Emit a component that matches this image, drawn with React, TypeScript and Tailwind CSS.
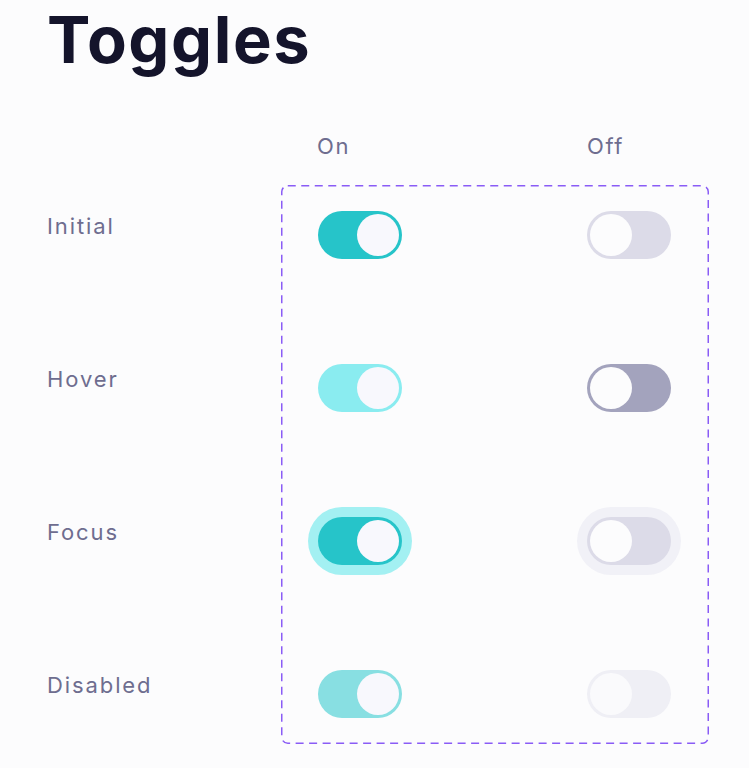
import React from 'react'

type Variant = {
  track: string
  thumb: string
  ring?: string
}

const rows: { label: string; on: Variant; off: Variant }[] = [
  {
    label: 'Initial',
    on: { track: 'bg-[#26c4c9]', thumb: 'bg-[#f8f8fd]' },
    off: { track: 'bg-[#dcdbe8]', thumb: 'bg-[#fcfcfd]' },
  },
  {
    label: 'Hover',
    on: { track: 'bg-[#8aecf0]', thumb: 'bg-[#f8f8fd]' },
    off: { track: 'bg-[#a3a3bd]', thumb: 'bg-[#fcfcfd]' },
  },
  {
    label: 'Focus',
    on: { track: 'bg-[#26c4c9]', thumb: 'bg-[#f8f8fd]', ring: 'shadow-[0_0_0_10px_#a3f0f2]' },
    off: { track: 'bg-[#dcdbe8]', thumb: 'bg-[#fcfcfd]', ring: 'shadow-[0_0_0_10px_#f1f1f7]' },
  },
  {
    label: 'Disabled',
    on: { track: 'bg-[#88dfe2]', thumb: 'bg-[#f8f8fd]' },
    off: { track: 'bg-[#efeff5]', thumb: 'bg-[#fafafc]' },
  },
]

function Toggle({ checked, v }: { checked: boolean; v: Variant }) {
  return (
    <div
      className={`flex h-[48px] w-[84px] rounded-full p-[3px] ${checked ? 'justify-end' : 'justify-start'} ${v.track} ${v.ring ?? ''}`}
    >
      <div className={`h-[42px] w-[42px] rounded-full ${v.thumb}`} />
    </div>
  )
}

export default function App() {
  return (
    <div
      className="min-h-[768px] w-full bg-[#fcfcfd] pl-[47px]"
      style={{ fontFamily: 'Inter, "Noto Sans", sans-serif' }}
    >
      <h1 className="pt-[2px] text-[65px] leading-[76px] font-bold tracking-[1.6px] text-[#14142b]">Toggles</h1>

      {/* column headers */}
      <div className="mt-[53px] flex text-[22px] leading-[30px] tracking-[1.6px] text-[#6e6d8f]">
        <div className="w-[270px]" />
        <div className="w-[270px]">On</div>
        <div>Off</div>
      </div>

      <div className="mt-[24px] flex">
        {/* row labels */}
        <div className="flex w-[234px] flex-col gap-[105px] pt-[26px]">
          {rows.map((r) => (
            <div
              key={r.label}
              className="h-[48px] text-[22px] leading-[30px] tracking-[1.9px] text-[#6e6d8f]"
            >
              {r.label}
            </div>
          ))}
        </div>

        {/* dashed state box */}
        <div className="relative flex w-[428px] flex-col gap-[105px] pt-[26px] pb-[25px]">
          <svg className="pointer-events-none absolute inset-0" width="428" height="559">
            <rect
              x="0.75"
              y="0.75"
              width="426.5"
              height="557.5"
              rx="6"
              fill="none"
              stroke="#8a5cf6"
              strokeWidth="1.5"
              strokeDasharray="8 5.5"
            />
          </svg>
          {rows.map((r) => (
            <div key={r.label} className="flex">
              <div className="w-[306px] pl-[37px]">
                <Toggle checked v={r.on} />
              </div>
              <Toggle checked={false} v={r.off} />
            </div>
          ))}
        </div>
      </div>
    </div>
  )
}
